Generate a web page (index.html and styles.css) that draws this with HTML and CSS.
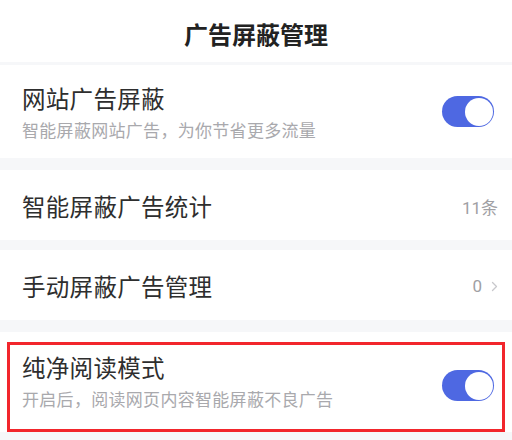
FILE: index.html
```html
<!DOCTYPE html>
<html lang="zh">
<head>
<meta charset="utf-8">
<link rel="stylesheet" href="styles.css">
</head>
<body>
<div class="page">
  <header class="header">广告屏蔽管理</header>

  <section class="card card-tall">
    <div class="text">
      <div class="title">网站广告屏蔽</div>
      <div class="sub">智能屏蔽网站广告，为你节省更多流量</div>
    </div>
    <div class="toggle"><span class="knob"></span></div>
  </section>

  <section class="card card-row">
    <div class="title">智能屏蔽广告统计</div>
    <div class="value">11条</div>
  </section>

  <section class="card card-row">
    <div class="title">手动屏蔽广告管理</div>
    <div class="value">0<svg class="chev" width="7" height="11" viewBox="0 0 7 11"><path d="M1.5 1.5 L5.5 5.5 L1.5 9.5" fill="none" stroke="#c8c8cc" stroke-width="1.3" stroke-linecap="round" stroke-linejoin="round"/></svg></div>
  </section>

  <section class="card card-last">
    <div class="highlight">
      <div class="text">
        <div class="title">纯净阅读模式</div>
        <div class="sub">开启后，阅读网页内容智能屏蔽不良广告</div>
      </div>
      <div class="toggle toggle-up"><span class="knob"></span></div>
    </div>
  </section>
</div>
</body>
</html>
```

FILE: styles.css
```css
html, body {
  margin: 0;
  padding: 0;
  background: #f6f7f9;
}
body {
  font-family: "Noto Sans CJK SC", "Noto Sans", sans-serif;
  color: #2b2b2b;
  width: 512px;
  height: 440px;
  overflow: hidden;
}
.page {
  display: flex;
  flex-direction: column;
}
.header {
  height: 62px;
  background: #fff;
  display: flex;
  align-items: center;
  justify-content: center;
  font-size: 24px;
  font-weight: bold;
  color: #222;
  margin-bottom: 3px;
  padding-top: 4px;
  box-sizing: border-box;
}
.card {
  background: #fff;
  box-sizing: border-box;
}
.card-tall {
  height: 93px;
  display: flex;
  align-items: center;
  justify-content: space-between;
  padding: 0 18px 0 22px;
  margin-bottom: 12px;
}
.card-row {
  height: 70px;
  display: flex;
  align-items: center;
  justify-content: space-between;
  padding: 2px 14px 0 22px;
  margin-bottom: 10px;
}
.card-row:nth-of-type(3) { margin-bottom: 12px; }
.text {
  display: flex;
  flex-direction: column;
  gap: 7px;
}
.title {
  font-size: 23.5px;
  line-height: 30px;
  color: #2e2e2e;
  letter-spacing: 0.3px;
}
.sub {
  font-size: 17px;
  line-height: 20px;
  color: #a9a9ad;
  letter-spacing: 0.3px;
}
.value {
  font-size: 17px;
  color: #a0a0a4;
  display: flex;
  align-items: center;
  gap: 9px;
  font-family: "Roboto", "Noto Sans CJK SC", sans-serif;
}
.chev { display: block; }
.toggle {
  width: 52px;
  height: 31px;
  border-radius: 16px;
  background: #4e68e2;
  position: relative;
  flex: none;
}
.knob {
  position: absolute;
  right: 1.5px;
  top: 1.5px;
  width: 28px;
  height: 28px;
  border-radius: 50%;
  background: #fff;
}
.card-last {
  height: 100px;
  padding: 10px 7px 0;
}
.highlight {
  height: 90px;
  border: 3px solid #f2262c;
  box-sizing: border-box;
  display: flex;
  align-items: flex-start;
  justify-content: space-between;
  padding: 7px 8px 0 12px;
}
.toggle-up {
  margin-top: 18px;
}
```
